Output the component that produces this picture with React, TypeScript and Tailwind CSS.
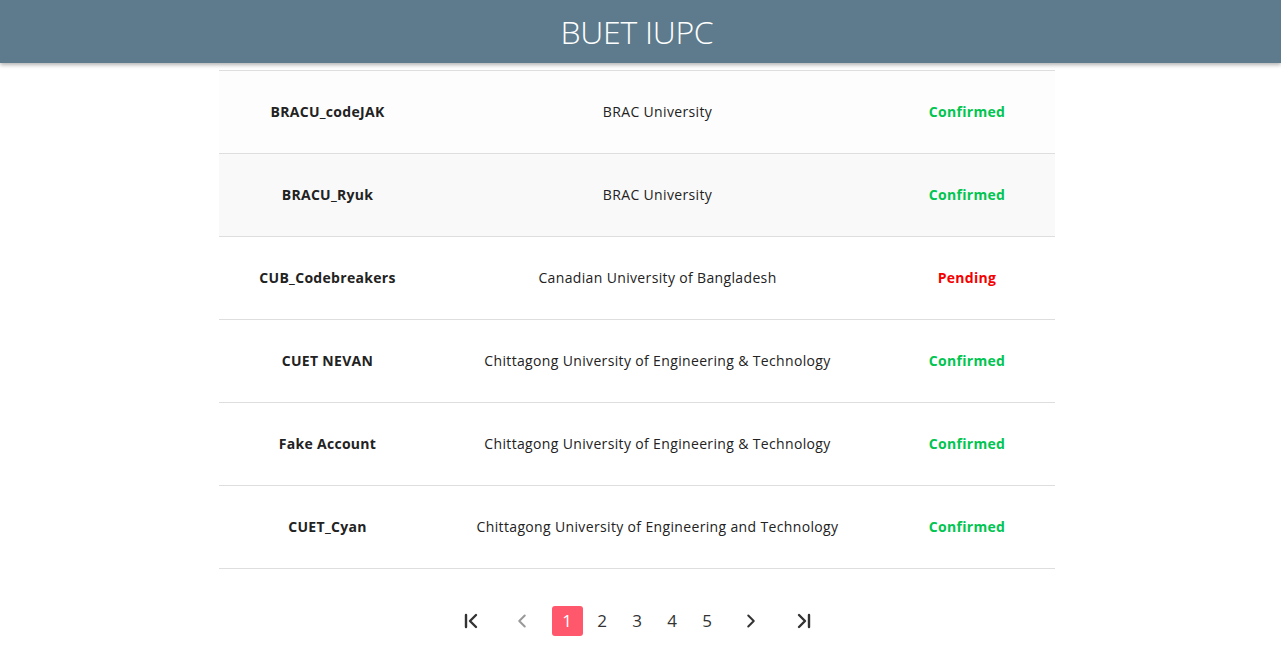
import { ChevronFirst, ChevronLast, ChevronLeft, ChevronRight } from 'lucide-react';

const teams = [
  { name: 'BRACU_codeJAK', uni: 'BRAC University', status: 'Confirmed', bg: 'bg-[#fdfdfd]' },
  { name: 'BRACU_Ryuk', uni: 'BRAC University', status: 'Confirmed', bg: 'bg-[#f9f9f9]' },
  { name: 'CUB_Codebreakers', uni: 'Canadian University of Bangladesh', status: 'Pending', bg: 'bg-white' },
  { name: 'CUET NEVAN', uni: 'Chittagong University of Engineering & Technology', status: 'Confirmed', bg: 'bg-white' },
  { name: 'Fake Account', uni: 'Chittagong University of Engineering & Technology', status: 'Confirmed', bg: 'bg-white' },
  { name: 'CUET_Cyan', uni: 'Chittagong University of Engineering and Technology', status: 'Confirmed', bg: 'bg-white' }
];

export default function App() {
  return (
    <div className="min-h-[670px] bg-white font-['Open_Sans',sans-serif] text-[#222]">
      <header className="h-[63px] bg-[#5d7b8c] shadow-[0_2px_4px_rgba(0,0,0,0.3)] relative z-10">
        <div className="w-[1274px] h-full flex items-center justify-center">
          <h1 className="text-white text-[32px] font-light tracking-[-0.3px]">BUET IUPC</h1>
        </div>
      </header>

      <div className="w-[1274px]">
        <div className="w-[836px] mx-auto mt-[7px] border-t border-[#dedede]">
          {teams.map((t) => (
            <div key={t.name} className={`flex h-[83px] items-center pb-[2px] border-b border-[#dedede] text-[14px] ${t.bg}`}>
              <div className="w-[217px] text-center font-bold tracking-[0.3px]">{t.name}</div>
              <div className="w-[443px] text-center tracking-[0.35px]">{t.uni}</div>
              <div
                className={`flex-1 text-center font-bold tracking-[0.3px] ${t.status === 'Pending' ? 'text-[#f50000]' : 'text-[#00c550]'}`}
              >
                {t.status}
              </div>
            </div>
          ))}
        </div>

        <div className="flex items-center justify-center mt-[37px] text-[#333] text-[17px]">
          <ChevronFirst size={24} strokeWidth={2.4} className="text-[#333]" />
          <ChevronLeft size={22} strokeWidth={2.2} className="text-[#999] ml-[28px]" />
          <div className="ml-[19px] w-[31px] h-[30px] rounded-[3px] bg-[#ff576b] text-white flex items-center justify-center">1</div>
          <div className="w-[35px] text-center ml-[2px]">2</div>
          <div className="w-[35px] text-center">3</div>
          <div className="w-[35px] text-center">4</div>
          <div className="w-[35px] text-center">5</div>
          <ChevronRight size={22} strokeWidth={2.2} className="text-[#333] ml-[15px]" />
          <ChevronLast size={24} strokeWidth={2.4} className="text-[#333] ml-[30px]" />
        </div>
      </div>
    </div>
  );
}
